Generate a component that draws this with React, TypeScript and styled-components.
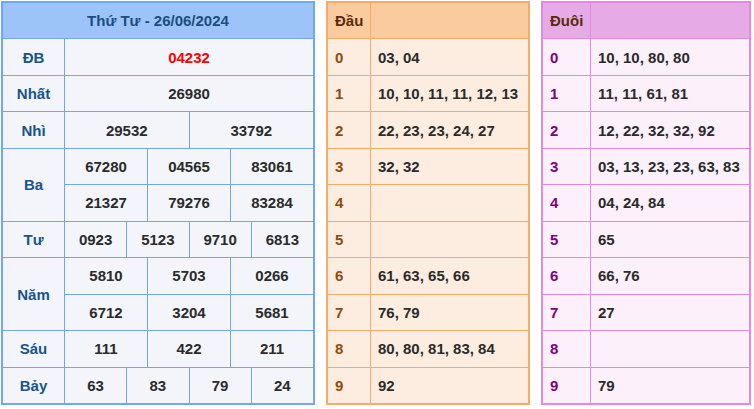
import React from "react";
import styled, { createGlobalStyle } from "styled-components";

const Global = createGlobalStyle`
  html, body { margin: 0; padding: 0; background: #ffffff; }
  body { font-family: Arial, "Liberation Sans", Helvetica, sans-serif; }
`;

const Page = styled.div`
  display: flex;
  align-items: flex-start;
  gap: 11px;
  padding: 1px 0 0 1px;
`;

type Palette = { border: string; head: string; body: string };

const Table = styled.div<{ $p: Palette; $w: number; $cols: string }>`
  box-sizing: border-box;
  width: ${(p) => p.$w}px;
  height: 404px;
  border: 2px solid ${(p) => p.$p.border};
  background: ${(p) => p.$p.border};
  display: grid;
  grid-template-columns: ${(p) => p.$cols};
  grid-template-rows: repeat(11, 1fr);
  gap: 1px;
  font-size: 15px;
  font-weight: bold;
`;

const Cell = styled.div<{ $bg: string; $color?: string; $align?: "left" | "center"; $span?: number; $col?: string }>`
  background: ${(p) => p.$bg};
  color: ${(p) => p.$color || "#2b2b2b"};
  display: flex;
  align-items: center;
  justify-content: ${(p) => (p.$align === "left" ? "flex-start" : "center")};
  padding: ${(p) => (p.$align === "left" ? "0 0 0 7px" : "0")};
  grid-row: ${(p) => (p.$span ? `span ${p.$span}` : "auto")};
  grid-column: ${(p) => p.$col || "auto"};
  white-space: nowrap;
  min-width: 0;
`;

const ValueRow = styled.div<{ $n: number; $border: string }>`
  grid-column: 2;
  display: grid;
  grid-template-columns: repeat(${(p) => p.$n}, 1fr);
  gap: 1px;
  background: ${(p) => p.$border};
`;

const blue: Palette = { border: "#70a7f2", head: "#9dc4f8", body: "#f3f5fa" };
const orange: Palette = { border: "#f6ab68", head: "#f9cb9f", body: "#fdede0" };
const pink: Palette = { border: "#e389e0", head: "#e6aae6", body: "#fcf0fa" };

const prizes: { label: string; rows: string[][]; red?: boolean }[] = [
  { label: "ĐB", rows: [["04232"]], red: true },
  { label: "Nhất", rows: [["26980"]] },
  { label: "Nhì", rows: [["29532", "33792"]] },
  { label: "Ba", rows: [["67280", "04565", "83061"], ["21327", "79276", "83284"]] },
  { label: "Tư", rows: [["0923", "5123", "9710", "6813"]] },
  { label: "Năm", rows: [["5810", "5703", "0266"], ["6712", "3204", "5681"]] },
  { label: "Sáu", rows: [["111", "422", "211"]] },
  { label: "Bảy", rows: [["63", "83", "79", "24"]] },
];

const dau = [
  "03, 04",
  "10, 10, 11, 11, 12, 13",
  "22, 23, 23, 24, 27",
  "32, 32",
  "",
  "",
  "61, 63, 65, 66",
  "76, 79",
  "80, 80, 81, 83, 84",
  "92",
];

const duoi = [
  "10, 10, 80, 80",
  "11, 11, 61, 81",
  "12, 22, 32, 32, 92",
  "03, 13, 23, 23, 63, 83",
  "04, 24, 84",
  "65",
  "66, 76",
  "27",
  "",
  "79",
];

const LABEL_BLUE = "#17548a";

function Results() {
  return (
    <Table $p={blue} $w={314} $cols="61px 1fr">
      <Cell $bg={blue.head} $color="#1c4d7e" $col="1 / span 2">
        Thứ Tư - 26/06/2024
      </Cell>
      {prizes.map((pr) => (
        <React.Fragment key={pr.label}>
          <Cell $bg={blue.body} $color={LABEL_BLUE} $col="1" $span={pr.rows.length}>
            {pr.label}
          </Cell>
          {pr.rows.map((r, i) => (
            <ValueRow key={i} $n={r.length} $border={blue.border}>
              {r.map((v, j) => (
                <Cell key={j} $bg={blue.body} $color={pr.red ? "#ff0000" : "#2b2b2b"}>
                  {v}
                </Cell>
              ))}
            </ValueRow>
          ))}
        </React.Fragment>
      ))}
    </Table>
  );
}

function Loto({ p, w, labelW, title, digitColor, data }: { p: Palette; w: number; labelW: number; title: string; digitColor: string; data: string[] }) {
  return (
    <Table $p={p} $w={w} $cols={`${labelW}px 1fr`}>
      <Cell $bg={p.head} $color="#5a2a0c" $align="left">
        {title}
      </Cell>
      <Cell $bg={p.head} />
      {data.map((v, i) => (
        <React.Fragment key={i}>
          <Cell $bg={p.body} $color={digitColor} $align="left">
            {i}
          </Cell>
          <Cell $bg={p.body} $align="left">
            {v}
          </Cell>
        </React.Fragment>
      ))}
    </Table>
  );
}

export default function App() {
  return (
    <>
      <Global />
      <Page>
        <Results />
        <Loto p={orange} w={204} labelW={42} title="Đầu" digitColor="#8e4c0c" data={dau} />
        <Loto p={pink} w={210} labelW={47} title="Đuôi" digitColor="#800080" data={duoi} />
      </Page>
    </>
  );
}
